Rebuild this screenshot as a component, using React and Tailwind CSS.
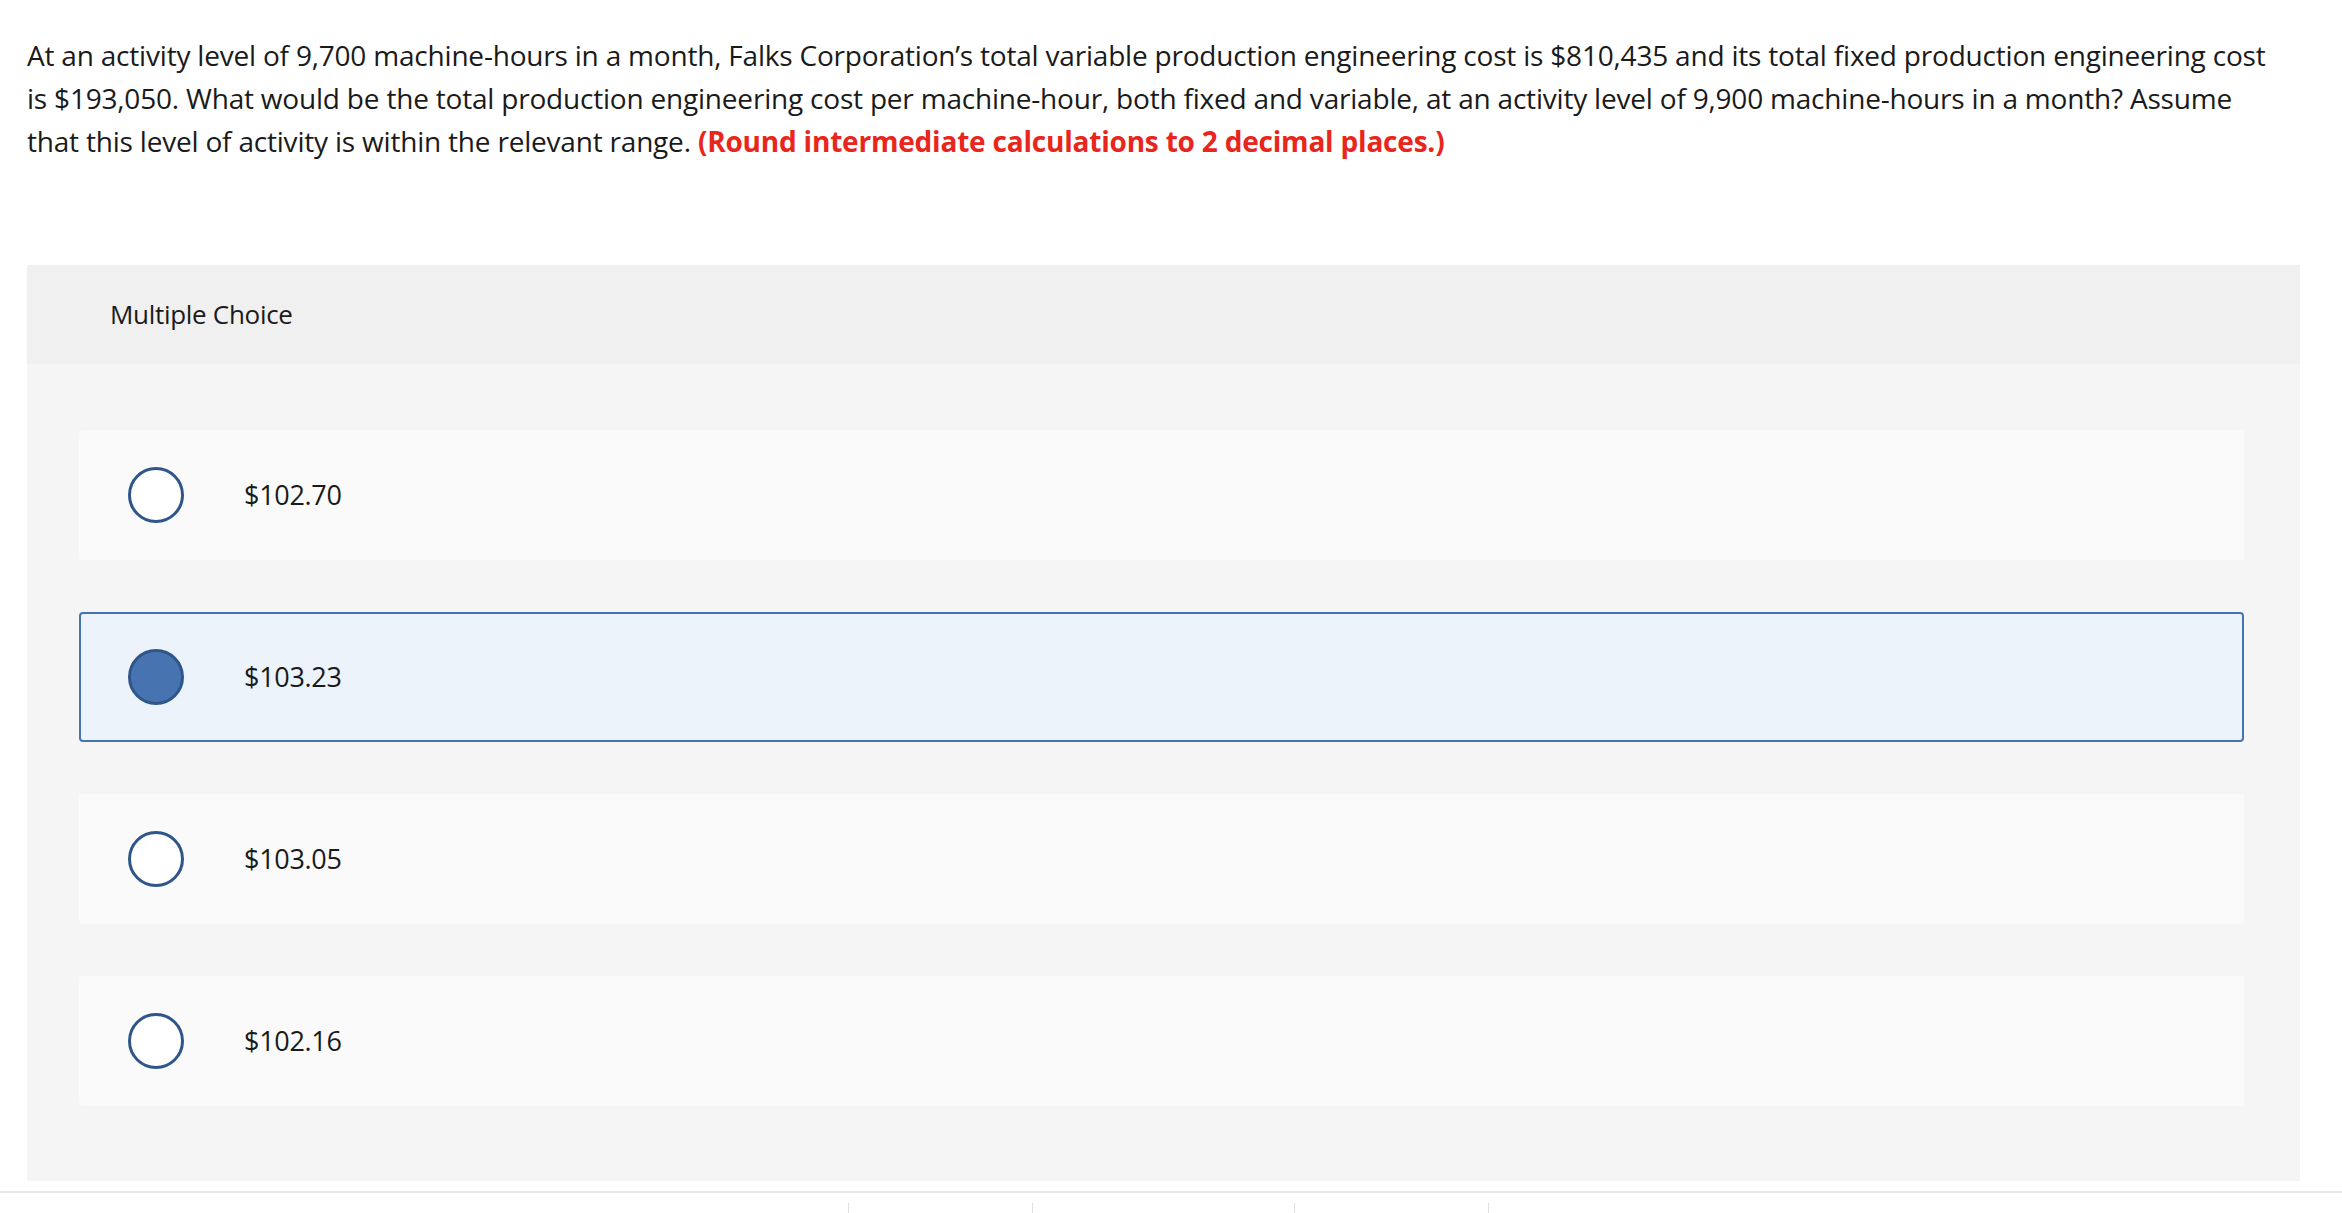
import React from 'react';

const options = [
  { label: '$102.70', selected: false },
  { label: '$103.23', selected: true },
  { label: '$103.05', selected: false },
  { label: '$102.16', selected: false },
];

const App = () => {
  return (
    <div className="min-h-screen w-full bg-white text-[#1a1a1a]" style={{ fontFamily: '"Open Sans", Lato, sans-serif' }}>
      <div className="pl-[27px] pr-[42px] pt-[34px]">
        <p className="text-[28px] leading-[43px] tracking-[-0.2px] pr-[10px]">
          At an activity level of 9,700 machine-hours in a month, Falks Corporation’s total variable production engineering cost is $810,435 and its total fixed production engineering cost is $193,050. What would be the total production engineering cost per machine-hour, both fixed and variable, at an activity level of 9,900 machine-hours in a month? Assume that this level of activity is within the relevant range.{' '}
          <span className="font-bold text-[#e8261b]">(Round intermediate calculations to 2 decimal places.)</span>
        </p>

        <div className="mt-[102px] bg-[#f5f5f5]">
          {/* Header */}
          <div className="h-[99px] bg-[#f0f0f0] flex items-center pl-[83px]">
            <span className="text-[26px] tracking-[-0.3px]">Multiple Choice</span>
          </div>

          {/* Options */}
          <div className="flex flex-col gap-[52px] pl-[52px] pr-[56px] pt-[66px] pb-[75px]">
            {options.map((opt, i) => (
              <div
                key={i}
                className={
                  opt.selected
                    ? 'h-[130px] rounded-[4px] border-2 border-[#4673b3] bg-[#ecf3fb] flex items-center pl-[47px]'
                    : 'h-[130px] rounded-[4px] border-2 border-transparent bg-[#fafafa] flex items-center pl-[47px]'
                }
              >
                <span
                  className={
                    opt.selected
                      ? 'w-[56px] h-[56px] rounded-full bg-[#4774b1] border-[3px] border-[#2f5589] shrink-0'
                      : 'w-[56px] h-[56px] rounded-full bg-white border-[3px] border-[#2f5589] shrink-0'
                  }
                />
                <span className="ml-[60px] text-[27px] tracking-[-0.3px]">{opt.label}</span>
              </div>
            ))}
          </div>
        </div>
      </div>

      {/* Footer strip */}
      <div className="mt-[10px] border-t-2 border-[#e8e8e8] h-[30px]">
        <div className="flex h-full">
          <div className="w-[848px]" />
          <div className="w-[184px] border-l border-[#e0e0e0] mt-[10px]" />
          <div className="w-[262px] border-l border-[#e0e0e0] mt-[10px]" />
          <div className="w-[194px] border-l border-[#e0e0e0] mt-[10px]" />
          <div className="border-l border-[#e0e0e0] mt-[10px]" />
        </div>
      </div>
    </div>
  );
};

export default App;
